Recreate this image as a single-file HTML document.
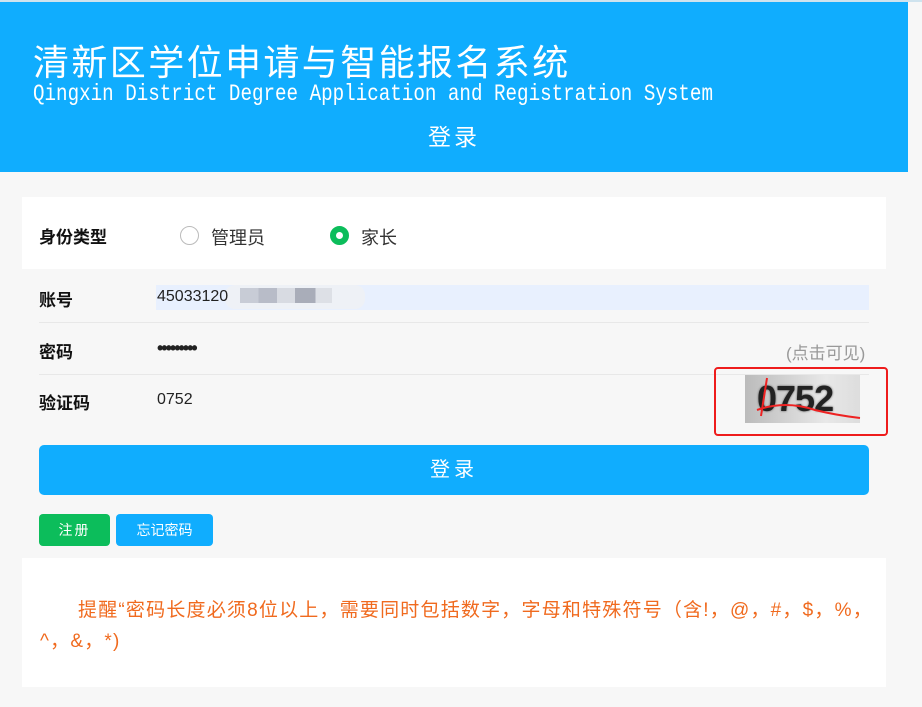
<!DOCTYPE html>
<html><head><meta charset="utf-8"><style>
body{margin:0;width:922px;height:707px;background:#f7f7f7;font-family:"Liberation Sans","Noto Sans CJK SC",sans-serif;position:relative;overflow:hidden}
.hd{position:absolute;left:0;top:2px;width:908px;height:170px;background:#10adfe;color:#fff}
.t1{position:absolute;left:33px;top:34px;font-size:36px;font-family:"Noto Sans CJK SC",sans-serif;letter-spacing:2.4px;line-height:48px;white-space:nowrap}
.t2{position:absolute;left:33px;top:78px;font-size:23px;font-family:"Liberation Mono",monospace;transform:scaleX(0.835);transform-origin:left;white-space:nowrap;line-height:28px}
.t3{position:absolute;left:0;width:908px;text-align:center;top:116px;font-size:23px;letter-spacing:3px}
.abs{position:absolute}
.lbl{position:absolute;left:39px;font-size:17px;font-weight:bold;color:#111}
.val{position:absolute;left:157px;font-size:16px;color:#222}
.sep{position:absolute;left:39px;width:830px;height:1px;background:#e8e8e8}
</style></head><body>
<div class="abs" style="left:0;top:0;width:922px;height:2px;background:#cfe3ee"></div>
<div class="hd">
<div class="t1">清新区学位申请与智能报名系统</div>
<div class="t2">Qingxin District Degree Application and Registration System</div>
<div class="t3">登录</div>
</div>
<div class="abs" style="left:22px;top:197px;width:864px;height:72px;background:#fff"></div>
<div class="lbl" style="top:223px">身份类型</div>
<div class="abs" style="left:180px;top:226px;width:19px;height:19px;border:1px solid #bbb;border-radius:50%;box-sizing:border-box"></div>
<div class="abs" style="left:211px;top:224px;font-size:18px;color:#333">管理员</div>
<div class="abs" style="left:330px;top:226px;width:19px;height:19px;border:6px solid #0cbd5b;border-radius:50%;box-sizing:border-box;background:#fff"></div>
<div class="abs" style="left:361px;top:224px;font-size:18px;color:#333">家长</div>

<div class="abs" style="left:156px;top:285px;width:713px;height:25px;background:#e8f0fe"></div>
<div class="lbl" style="top:286px">账号</div>
<div class="abs" style="left:225px;top:285px;width:140px;height:24px;background:#eef1f6;border-radius:10px"></div>
<div class="abs" style="left:240px;top:288px;width:92px;height:15px;background:linear-gradient(90deg,#c8ccd6 0 20%,#b8bcc8 20% 40%,#d8dbe2 40% 60%,#a9adb9 60% 82%,#dde0e6 82%)"></div>
<div class="val" style="top:288px">45033120</div>
<div class="sep" style="top:322px"></div>
<div class="lbl" style="top:338px">密码</div>
<div class="val" style="top:338px;font-size:18px;letter-spacing:-2px;font-weight:bold">•••••••••</div>
<div class="abs" style="left:786px;top:339px;font-size:17px;color:#999">(点击可见)</div>
<div class="sep" style="top:374px"></div>
<div class="lbl" style="top:389px">验证码</div>
<div class="val" style="top:391px">0752</div>
<div class="abs" style="left:745px;top:375px;width:115px;height:48px;background:linear-gradient(90deg,#bbb,#e8e8e8 70%,#ddd)"></div>
<div class="abs" style="left:757px;top:378px;font-size:36px;font-weight:bold;color:#222;letter-spacing:-1px;text-shadow:0 0 2px #555">0752</div>
<svg class="abs" style="left:745px;top:370px" width="120" height="60"><path d="M22 8 L16 46 M12 40 Q40 30 70 40 Q90 45 115 48" stroke="#e22" stroke-width="2" fill="none"/></svg>
<div class="abs" style="left:714px;top:367px;width:174px;height:69px;border:2px solid #ee1c1c;border-radius:4px;box-sizing:border-box"></div>

<div class="abs" style="left:39px;top:445px;width:830px;height:50px;background:#10adfe;border-radius:5px;color:#fff;font-size:20px;text-align:center;line-height:50px;letter-spacing:4px">登录</div>
<div class="abs" style="left:39px;top:514px;width:71px;height:32px;background:#0cbd5b;border-radius:4px;color:#fff;font-size:14px;text-align:center;line-height:32px;letter-spacing:2px">注册</div>
<div class="abs" style="left:116px;top:514px;width:97px;height:32px;background:#10adfe;border-radius:4px;color:#fff;font-size:14px;text-align:center;line-height:32px">忘记密码</div>
<div class="abs" style="left:22px;top:558px;width:864px;height:129px;background:#fff"></div>
<div class="abs" style="left:22px;top:595px;width:860px;font-size:19px;color:#f06a1e;line-height:31px;text-indent:38px;padding-left:18px;box-sizing:border-box;letter-spacing:1.2px;white-space:nowrap">提醒“密码长度必须8位以上，需要同时包括数字，字母和特殊符号（含!，@，#，$，%，<br>^，&amp;，*)</div>
</body></html>
